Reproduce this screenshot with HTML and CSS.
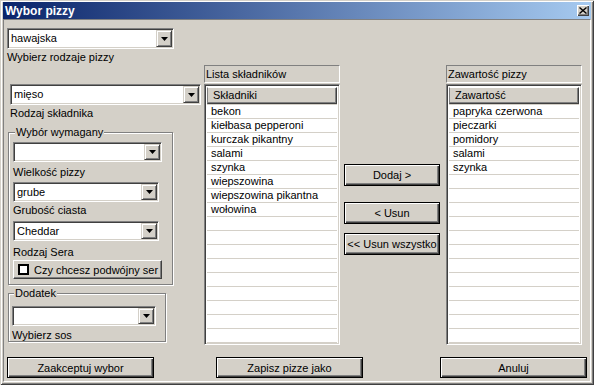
FILE: index.html
```html
<!DOCTYPE html>
<html lang="pl">
	<head>
		<meta charset="UTF-8" />
		<meta name="viewport" content="width=device-width, initial-scale=1.0" />
		<title>Wybor pizzy</title>
		<link rel="stylesheet" href="styles.css">
	</head>
	<body>
		<div class="window">
			<div class="titlebar">
				<span class="title">Wybor pizzy</span>
				<span class="close">
					<svg width="8" height="7" viewBox="0 0 8 7"><path d="M0.5 0.5L7.5 6.5M7.5 0.5L0.5 6.5" stroke="#000" stroke-width="1.4" fill="none"/></svg>
				</span>
			</div>
			<div class="client">
				<div class="main">
					<div class="col-left">
						<div class="combo combo-pizza">
							<span class="value">hawajska</span>
							<span class="drop"><svg width="7" height="4" viewBox="0 0 7 4"><path d="M0 0h7L3.5 4z"/></svg></span>
						</div>
						<div class="label">Wybierz rodzaje pizzy</div>
						<div class="combo combo-type">
							<span class="value">mięso</span>
							<span class="drop"><svg width="7" height="4" viewBox="0 0 7 4"><path d="M0 0h7L3.5 4z"/></svg></span>
						</div>
						<div class="label label-type">Rodzaj składnika</div>

						<fieldset class="group group-required">
							<legend>Wybór wymagany</legend>
							<div class="combo combo-size">
								<span class="value"></span>
								<span class="drop"><svg width="7" height="4" viewBox="0 0 7 4"><path d="M0 0h7L3.5 4z"/></svg></span>
							</div>
							<div class="label label-size">Wielkość pizzy</div>
							<div class="combo combo-small">
								<span class="value">grube</span>
								<span class="drop"><svg width="7" height="4" viewBox="0 0 7 4"><path d="M0 0h7L3.5 4z"/></svg></span>
							</div>
							<div class="label label-dough">Grubość ciasta</div>
							<div class="combo combo-small combo-cheese">
								<span class="value">Cheddar</span>
								<span class="drop"><svg width="7" height="4" viewBox="0 0 7 4"><path d="M0 0h7L3.5 4z"/></svg></span>
							</div>
							<div class="label label-cheese">Rodzaj Sera</div>
							<div class="check-btn">
								<span class="box"></span>
								<span>Czy chcesz podwójny ser</span>
							</div>
						</fieldset>

						<fieldset class="group group-extra">
							<legend>Dodatek</legend>
							<div class="combo combo-sauce">
								<span class="value"></span>
								<span class="drop"><svg width="7" height="4" viewBox="0 0 7 4"><path d="M0 0h7L3.5 4z"/></svg></span>
							</div>
							<div class="label label-sauce">Wybierz sos</div>
						</fieldset>
					</div>

					<div class="col-list">
						<div class="caption">Lista składników</div>
						<div class="list">
							<div class="list-head">Składniki</div>
							<div class="rows">
								<div class="row">bekon</div>
								<div class="row">kiełbasa pepperoni</div>
								<div class="row">kurczak pikantny</div>
								<div class="row">salami</div>
								<div class="row">szynka</div>
								<div class="row">wiepszowina</div>
								<div class="row">wiepszowina pikantna</div>
								<div class="row">wołowina</div>
								<div class="row"></div>
								<div class="row"></div>
								<div class="row"></div>
								<div class="row"></div>
								<div class="row"></div>
								<div class="row"></div>
								<div class="row"></div>
								<div class="row"></div>
								<div class="row"></div>
								<div class="row"></div>
							</div>
						</div>
					</div>

					<div class="col-actions">
						<button class="btn btn-add">Dodaj &gt;</button>
						<button class="btn btn-remove">&lt; Usun</button>
						<button class="btn btn-remove-all">&lt;&lt; Usun wszystko</button>
					</div>

					<div class="col-list col-right">
						<div class="caption">Zawartość pizzy</div>
						<div class="list">
							<div class="list-head">Zawartość</div>
							<div class="rows">
								<div class="row">papryka czerwona</div>
								<div class="row">pieczarki</div>
								<div class="row">pomidory</div>
								<div class="row">salami</div>
								<div class="row">szynka</div>
								<div class="row"></div>
								<div class="row"></div>
								<div class="row"></div>
								<div class="row"></div>
								<div class="row"></div>
								<div class="row"></div>
								<div class="row"></div>
								<div class="row"></div>
								<div class="row"></div>
								<div class="row"></div>
								<div class="row"></div>
								<div class="row"></div>
								<div class="row"></div>
							</div>
						</div>
					</div>
				</div>

				<div class="footer">
					<button class="btn btn-footer">Zaakceptuj wybor</button>
					<button class="btn btn-footer btn-save">Zapisz pizze jako</button>
					<button class="btn btn-footer btn-cancel">Anuluj</button>
				</div>
			</div>
		</div>
	</body>
</html>
```

FILE: styles.css
```css
body {
	margin: 0;
	background-color: #d4d0c8;
	font-family: "Liberation Sans", Arial, sans-serif;
	font-size: 11px;
	color: #000;
}
.window {
	width: 594px;
	height: 385px;
	box-sizing: border-box;
	padding: 2px 3px 3px 3px;
	display: flex;
	flex-direction: column;
	background-color: #d4d0c8;
	box-shadow: inset 1px 1px #d4d0c8, inset -1px -1px #404040, inset 2px 2px #fff, inset -2px -2px #808080;
}
.titlebar {
	height: 17px;
	flex: none;
	display: flex;
	align-items: center;
	justify-content: space-between;
	background: linear-gradient(to right, #0a246a, #a6caf0);
}
.title {
	margin-left: 2px;
	color: #fff;
	font-weight: bold;
	font-size: 12px;
}
.close {
	width: 12px;
	height: 11px;
	margin-right: 2px;
	display: flex;
	align-items: center;
	justify-content: center;
	background-color: #d4d0c8;
	box-shadow: inset 1px 1px #fff, inset -1px -1px #404040, inset -2px -2px #808080;
}
.client {
	flex: 1;
	display: flex;
	flex-direction: column;
	border: 1px solid;
	border-color: #808080 #fff #fff #808080;
}
.main {
	height: 337px;
	display: flex;
	align-items: flex-start;
	padding-left: 3px;
}

/* lewa kolumna */
.col-left {
	width: 194px;
	display: flex;
	flex-direction: column;
	align-items: flex-start;
}
.label {
	line-height: 13px;
	margin-top: 2px;
	white-space: nowrap;
}
.combo {
	height: 21px;
	box-sizing: border-box;
	display: flex;
	background-color: #fff;
	border: 1px solid;
	border-color: #808080 #fff #fff #808080;
	box-shadow: inset 1px 1px #404040, inset -1px -1px #d4d0c8;
}
.combo .value {
	flex: 1;
	padding: 2px 0 0 3px;
	line-height: 15px;
}
.combo .drop {
	width: 16px;
	margin: 1px 1px 1px 0;
	display: flex;
	align-items: center;
	justify-content: center;
	background-color: #d4d0c8;
	box-sizing: border-box;
	border: 1px solid;
	border-color: #d4d0c8 #404040 #404040 #d4d0c8;
	box-shadow: inset 1px 1px #fff, inset -1px -1px #808080;
}
.combo-pizza {
	width: 167px;
	margin-top: 8px;
}
.combo-type {
	width: 191px;
	margin: 20px 0 0 3px;
}
.label-type {
	margin-left: 3px;
}
.group {
	margin: 6px 0 0 1px;
	padding: 0 0 5px 4px;
	box-sizing: border-box;
	border: 1px solid #808080;
	box-shadow: inset 1px 1px #fff, 1px 1px #fff;
	display: flex;
	flex-direction: column;
	align-items: flex-start;
}
.group legend {
	margin-left: 2px;
	padding: 0 1px;
	line-height: 13px;
	background-color: #d4d0c8;
}
.group-required {
	width: 165px;
	min-width: 0;
}
.combo-size {
	width: 149px;
	height: 20px;
	margin-top: 3px;
}
.combo-small {
	width: 146px;
	height: 20px;
	margin-top: 3px;
}
.label-size {
	margin-top: 4px;
}
.label-dough {
	margin-top: 2px;
}
.combo-cheese {
	margin-top: 4px;
}
.label-cheese {
	margin-top: 5px;
}
.check-btn {
	width: 149px;
	height: 19px;
	margin-top: 1px;
	box-sizing: border-box;
	display: flex;
	align-items: center;
	gap: 5px;
	padding-left: 4px;
	border: 1px solid;
	border-color: #fff #404040 #404040 #fff;
	box-shadow: inset -1px -1px #808080;
	white-space: nowrap;
}
.check-btn .box {
	width: 11px;
	height: 11px;
	box-sizing: border-box;
	border: 2px solid #000;
	background-color: #fff;
}
.group-extra {
	width: 158px;
	min-width: 0;
	margin-top: 2px;
	padding: 0 0 0 3px;
}
.combo-sauce {
	width: 144px;
	height: 20px;
	margin-top: 6px;
}
.label-sauce {
	margin-top: 3px;
	line-height: 12px;
}

/* listy */
.col-list {
	width: 136px;
	margin: 45px 0 0 3px;
	display: flex;
	flex-direction: column;
}
.col-right {
	margin-left: 6px;
}
.caption {
	height: 18px;
	box-sizing: border-box;
	padding-left: 1px;
	line-height: 16px;
	border: 1px solid;
	border-color: #808080 #fff #fff #808080;
	white-space: nowrap;
}
.list {
	height: 261px;
	margin-top: 1px;
	box-sizing: border-box;
	overflow: hidden;
	background-color: #fff;
	border: 1px solid;
	border-color: #808080 #fff #fff #808080;
	box-shadow: inset 1px 1px #404040, inset -1px -1px #d4d0c8;
	padding: 2px 2px 0 2px;
}
.list-head {
	height: 17px;
	box-sizing: border-box;
	padding-left: 5px;
	line-height: 15px;
	background-color: #d4d0c8;
	border: 1px solid;
	border-color: #fff #404040 #404040 #808080;
	box-shadow: inset -1px -1px #808080;
}
.rows {
	border-top: 1px solid #d4d0c8;
}
.row {
	height: 14px;
	box-sizing: border-box;
	padding-left: 4px;
	line-height: 13px;
	border-bottom: 1px solid #d4d0c8;
	white-space: nowrap;
}

/* przyciski */
.btn {
	display: block;
	box-sizing: border-box;
	padding: 0;
	font-family: "Liberation Sans", Arial, sans-serif;
	font-size: 11px;
	color: #000;
	background-color: #d4d0c8;
	border: 1px solid #000;
	box-shadow: inset 1px 1px #fff, inset -1px -1px #404040, inset -2px -2px #808080;
	white-space: nowrap;
}
.col-actions {
	width: 96px;
	margin: 144px 0 0 4px;
	display: flex;
	flex-direction: column;
}
.col-actions .btn {
	width: 96px;
	height: 22px;
}
.btn-remove {
	margin-top: 16px;
}
.btn-remove-all {
	margin-top: 9px;
}
.footer {
	display: flex;
	padding-left: 3px;
}
.btn-footer {
	width: 147px;
	height: 21px;
}
.btn-save {
	margin-left: 62px;
}
.btn-cancel {
	margin-left: 77px;
}
```
